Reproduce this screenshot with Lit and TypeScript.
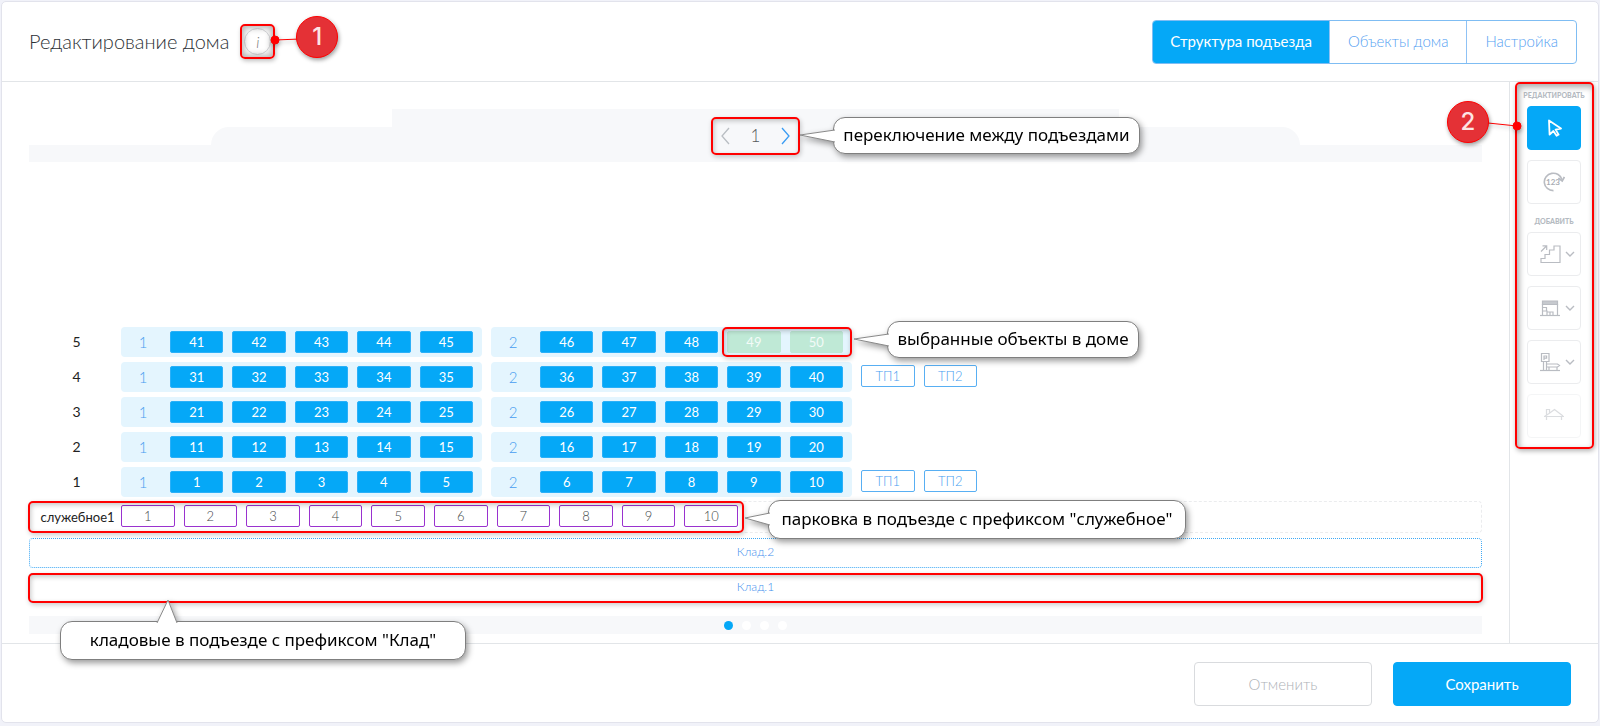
import { LitElement, html, css, svg, nothing } from "lit";
import { customElement, property, state } from "lit/decorators.js";
import { classMap } from "lit/directives/class-map.js";

type Side = "left" | "top";

@customElement("note-callout")
class NoteCallout extends LitElement {
  @property({ reflect: true }) side: Side = "left";
  @property({ type: Number }) reach = 36;

  static styles = css`
    :host {
      display: flex;
      align-items: center;
      justify-content: center;
      box-sizing: border-box;
      padding-bottom: 2px;
      border: 1px solid #7f7f7f;
      border-radius: 12px;
      background: #fff;
      color: #000;
      font: 400 17px/20px "Noto Sans", "Open Sans", sans-serif;
      white-space: nowrap;
      filter: drop-shadow(2px 3px 3px rgba(0, 0, 0, 0.4));
    }
    .tail {
      position: absolute;
      display: block;
      fill: #fff;
      stroke: #8a8a8a;
      stroke-width: 1;
    }
    .left {
      right: calc(100% - 1px);
      top: 11px;
    }
    .top {
      left: 95px;
      bottom: calc(100% - 1px);
    }
  `;

  render() {
    return html`
      ${this.side === "left"
        ? html`<svg class="tail left" width=${this.reach} height="14" aria-hidden="true">
            <path d="M${this.reach} 1 L1 6 L${this.reach} 13" />
          </svg>`
        : html`<svg class="tail top" width="22" height="24" aria-hidden="true">
            <path d="M1 24 L12 1 L21 24" />
          </svg>`}
      <slot></slot>
    `;
  }
}

@customElement("note-marker")
class NoteMarker extends LitElement {
  static styles = css`
    :host {
      display: grid;
      place-items: center;
      box-sizing: border-box;
      width: 42px;
      height: 42px;
      border: 1px solid #f00;
      border-radius: 50%;
      background: #e43136;
      box-shadow: 1px 2px 4px rgba(0, 0, 0, 0.4);
      color: #fde4e4;
      font: 500 24px/40px Inter, "Liberation Sans", sans-serif;
    }
  `;

  render() {
    return html`<slot></slot>`;
  }
}

interface Floor {
  level: number;
  sections: { name: number; flats: number[] }[];
  extra: string[];
}

const range = (from: number, count: number) =>
  Array.from({ length: count }, (_, i) => from + i);

const FLOORS: Floor[] = [5, 4, 3, 2, 1].map((level) => ({
  level,
  sections: [
    { name: 1, flats: range((level - 1) * 10 + 1, 5) },
    { name: 2, flats: range((level - 1) * 10 + 6, 5) },
  ],
  extra: level === 4 || level === 1 ? ["ТП1", "ТП2"] : [],
}));

const TABS = ["Структура подъезда", "Объекты дома", "Настройка"];

const ICONS = {
  cursor: svg`<path d="M3 2.5 L15 10.5 L9.6 11.6 L12.6 16.6 L10.6 17.8 L7.4 13 L3.6 16.6 Z" stroke-width="1.8" stroke-linejoin="round"/>`,
  renumber: svg`<path d="M10.5 18.6 A9 8.7 0 1 1 19 7.6" stroke-width="1.6"/><path d="M15.4 6 L19.2 9 L21.4 5" stroke-width="1.8"/><text x="10" y="13" text-anchor="middle" class="digits">123</text>`,
  stairs: svg`<path d="M1 18.5 V14.5 H5 V10.5 H9.5 V6 H14 V2 H20 V18.5 Z"/><path d="M1 7.5 L6.5 2 M2.5 1.8 H6.7 V6"/>`,
  shop: svg`<path d="M0 17.5 H20"/><path d="M2.5 3 H17.5 V6.5 H2.5 Z" class="solid"/><path d="M2.5 17.5 V6 M17.5 6 V17.5 M6.5 13 V9.5 H2.5 M3 13 H7 V17 M7 14 H13 V17 M10 14 V17"/>`,
  parking: svg`<path d="M0 18.5 H20"/><path d="M1.5 1.5 H9 V9.5 H1.5 Z M4 8 V4 H6.6 V6.2 H4 M3.5 9.5 V18 M6.5 9.5 V18 M6.5 12 H17.5 L19.5 13.5 L17.5 15 H6.5 M9 15 V18 M17 15 V18"/>`,
  storage: svg`<path d="M1 10.5 H21 M1.5 10.5 L6 7.5 L11.5 3.5 L20 10 M3.5 8.5 V3.5 H6.5 V6.5 M3.5 10 V14 M18.5 10 V14" stroke-width="1.2"/>`,
};

interface Tool {
  icon: keyof typeof ICONS;
  label: string;
  menu?: boolean;
  active?: boolean;
  faded?: boolean;
}

const TOOL_GROUPS: { title: string; tools: Tool[] }[] = [
  {
    title: "РЕДАКТИРОВАТЬ",
    tools: [
      { icon: "cursor", label: "Выделение", active: true },
      { icon: "renumber", label: "Нумерация" },
    ],
  },
  {
    title: "ДОБАВИТЬ",
    tools: [
      { icon: "stairs", label: "Подъезд", menu: true },
      { icon: "shop", label: "Помещение", menu: true },
      { icon: "parking", label: "Парковка", menu: true },
      { icon: "storage", label: "Чердак", faded: true },
    ],
  },
];

@customElement("app-root")
class AppRoot extends LitElement {
  @state() private tab = 0;
  @state() private selected = new Set([49, 50]);

  static styles = css`
    :host {
      display: flex;
      box-sizing: border-box;
      min-height: 100vh;
      padding: 1px 1px 3px;
      background: #f1f2f9;
      color: #3c4045;
      font: 300 14px/20px Lato, "Open Sans", sans-serif;
    }
    *,
    *::before {
      box-sizing: border-box;
    }
    button {
      margin: 0;
      padding: 0;
      font: inherit;
      color: inherit;
      background: none;
      border: 0;
      cursor: pointer;
    }
    .card {
      flex: 1;
      min-width: 0;
      display: flex;
      flex-direction: column;
      background: #fff;
      border: 1px solid #e2e3ec;
      border-radius: 5px;
    }
    .header {
      display: flex;
      align-items: center;
      justify-content: space-between;
      height: 80px;
      padding: 0 21px 0 27px;
      border-bottom: 1px solid #e2e5e8;
    }
    .heading {
      display: flex;
      align-items: center;
      gap: 15px;
    }
    h1 {
      margin: 0;
      padding-bottom: 2px;
      font-size: 20px;
      line-height: 28px;
      font-weight: 300;
      color: #2c3136;
    }
    .info-wrap {
      position: relative;
      display: flex;
    }
    .info {
      width: 27px;
      height: 27px;
      border: 1px solid #d9dadd;
      border-radius: 50%;
      background: #fff;
      color: #777;
      font-style: italic;
      font-size: 15px;
      line-height: 24px;
    }
    .tabs {
      display: flex;
      height: 44px;
      border: 1px solid #7fbdf3;
      border-radius: 4px;
      overflow: hidden;
    }
    .tab {
      padding: 0 18px 2px;
      color: #559ff2;
      font-size: 15px;
    }
    .tab + .tab {
      border-left: 1px solid #8fc2f5;
    }
    .tab.on {
      margin: -1px;
      background: #05a8f7;
      color: #fff;
      font-weight: 400;
    }
    .body {
      flex: 1;
      display: flex;
    }
    .stage {
      flex: 1;
      min-width: 0;
      display: flex;
      flex-direction: column;
      padding: 27px 27px 9px;
    }
    .roof {
      display: grid;
      justify-items: center;
      grid-template-rows: 18px 18px 17px;
    }
    .tier {
      height: 100%;
      background: #f7f8fa;
    }
    .tier.narrow {
      width: 50%;
      height: 36px;
    }
    .tier.middle {
      width: 75%;
      border-radius: 18px 18px 0 0;
      display: flex;
      justify-content: center;
    }
    .tier.wide {
      width: 100%;
    }
    .switcher {
      position: relative;
      display: flex;
      align-items: center;
      justify-content: space-between;
      width: 89px;
      height: 38px;
      margin-top: -10px;
      padding: 0 10px;
      font-size: 17px;
      color: #55595c;
    }
    .arrow {
      display: flex;
    }
    .arrow svg {
      fill: none;
      stroke: #b9bec3;
      stroke-width: 1.3;
    }
    .arrow.next svg {
      stroke: #3a9cf3;
    }
    .plan {
      display: flex;
      flex-direction: column;
      gap: 5px;
      margin-top: auto;
    }
    .floors {
      display: flex;
      flex-direction: column;
      gap: 5px;
      margin-bottom: -1px;
    }
    .floor {
      display: flex;
      gap: 9px;
      height: 30px;
    }
    .level {
      flex: none;
      display: grid;
      place-items: center;
      width: 83px;
      padding-left: 12px;
      color: #222;
      font-size: 14px;
      font-weight: 400;
    }
    .section {
      position: relative;
      display: flex;
      width: 361px;
      padding: 4px 9px 4px 0;
      border-radius: 4px;
      background: #e4f5fe;
    }
    .section-name {
      width: 49px;
      padding-right: 5px;
      text-align: center;
      line-height: 22px;
      font-size: 15px;
      color: #479df0;
    }
    .cells {
      flex: 1;
      display: grid;
      grid-auto-flow: column;
      grid-auto-columns: 1fr;
      gap: 9px;
    }
    .cell {
      height: 22px;
      border-radius: 2px;
      font-size: 13px;
      line-height: 20px;
    }
    .cell.flat {
      border: 1px solid #2bb0f8;
      background: #05a8f7;
      color: #fff;
      font-weight: 400;
    }
    .cell.picked {
      border-color: #bfe9d6;
      background: #bfe9d6;
      color: #f3fbf8;
    }
    .extra {
      width: 116px;
      flex: none;
      padding-top: 3px;
    }
    .cell.tech {
      border: 1px solid #58aff3;
      background: #fff;
      color: #479df0;
    }
    .parking {
      position: relative;
      display: flex;
      height: 32px;
      border: 1px dashed #ebecee;
      border-radius: 4px;
    }
    .parking .level {
      width: 91px;
      padding-left: 4px;
      font-size: 13px;
    }
    .spots {
      flex: none;
      width: 617px;
      padding-top: 3px;
    }
    .cell.spot {
      border: 1px solid #9a32cf;
      background: #fff;
      color: #444749;
    }
    .storage {
      position: relative;
      display: grid;
    }
    .store {
      height: 30px;
      padding-bottom: 2px;
      border: 1px dotted #3fa9f5;
      border-radius: 4px;
      color: #3f8fee;
      font-size: 12px;
      line-height: 26px;
    }
    .ground {
      display: flex;
      align-items: center;
      justify-content: center;
      gap: 9px;
      height: 18px;
      margin-top: 13px;
      background: #f7f8fa;
    }
    .dot {
      width: 9px;
      height: 9px;
      border-radius: 50%;
      background: #fff;
    }
    .dot.on {
      background: #05a8f7;
    }
    .side {
      position: relative;
      flex: none;
      display: flex;
      flex-direction: column;
      gap: 12px;
      width: 89px;
      padding-top: 8px;
      border-left: 1px solid #e2e5e8;
    }
    .group {
      display: flex;
      flex-direction: column;
      align-items: center;
      gap: 10px;
    }
    .group-title {
      margin: 0 0 -4px;
      color: #b4bac1;
      font-size: 7px;
      line-height: 10px;
      font-weight: 900;
    }
    .tool {
      display: flex;
      align-items: center;
      justify-content: center;
      gap: 3px;
      width: 54px;
      height: 44px;
      border: 1px solid #ebecee;
      border-radius: 4px;
      background: #fff;
    }
    .tool.menu {
      padding-left: 6px;
    }
    .tool svg {
      fill: none;
      stroke: #b9bcc2;
      stroke-width: 1.2;
    }
    .tool .solid {
      fill: #c6c9ce;
    }
    .tool.on {
      border-color: #05a8f7;
      background: #05a8f7;
    }
    .tool.on svg {
      stroke: #fff;
    }
    .tool.faded {
      opacity: 0.5;
    }
    .tool .digits {
      fill: #a9adb4;
      stroke: none;
      font: 700 8px/8px Lato, sans-serif;
    }
    .footer {
      display: flex;
      align-items: center;
      justify-content: flex-end;
      gap: 21px;
      height: 79px;
      padding: 1px 27px 0;
      border-top: 1px solid #e2e5e8;
    }
    .action {
      width: 178px;
      height: 44px;
      border: 1px solid #d9dbde;
      border-radius: 4px;
      color: #aeb2b7;
      font-size: 15px;
    }
    .action.primary {
      border-color: #05a8f7;
      background: #05a8f7;
      color: #fff;
      font-weight: 400;
    }

    .frame {
      position: absolute;
      z-index: 2;
      inset: 0;
      border: 2px solid #f00;
      border-radius: 5px;
      box-shadow:
        1px 2px 5px rgba(0, 0, 0, 0.2),
        inset 1px 2px 5px rgba(0, 0, 0, 0.22);
      pointer-events: none;
    }
    .frame.info-frame {
      inset: -4px;
      box-shadow:
        1px 2px 4px rgba(0, 0, 0, 0.25),
        inset 0 0 6px 2px rgba(0, 0, 0, 0.3);
    }
    .frame.side-frame {
      inset: 0 4px auto 5px;
      height: 367px;
      box-shadow:
        1px 2px 5px rgba(0, 0, 0, 0.3),
        inset 2px 3px 6px rgba(0, 0, 0, 0.35);
    }
    .frame.pick-frame {
      left: auto;
      width: 130px;
    }
    .frame.parking-frame {
      inset: -1px auto -1px -2px;
      width: 716px;
    }
    .frame.storage-frame {
      inset: 0 -1px;
    }
    .callout {
      position: absolute;
      z-index: 3;
      height: 37px;
      left: calc(100% + 33px);
      top: 0;
    }
    .callout.entrance {
      width: 307px;
    }
    .callout.picked-note {
      width: 252px;
      top: -6px;
      left: calc(100% + 35px);
    }
    .callout.parking-note {
      width: 418px;
      height: 39px;
      top: -2px;
      left: 738px;
    }
    .callout.storage-note {
      width: 406px;
      height: 39px;
      top: 48px;
      left: 31px;
    }
    .pointer {
      position: absolute;
      z-index: 3;
      overflow: visible;
      fill: #f00;
      stroke: #f00;
      filter: drop-shadow(1px 2px 2px rgba(0, 0, 0, 0.3));
    }
    .pointer.one {
      left: 24px;
      top: 5px;
    }
    .pointer.two {
      left: -22px;
      top: 36px;
    }
    .marker {
      position: absolute;
      z-index: 4;
    }
    .marker.one {
      left: 52px;
      top: -12px;
    }
    .marker.two {
      left: -63px;
      top: 19px;
    }
  `;

  private toggle(flat: number) {
    const next = new Set(this.selected);
    next.has(flat) ? next.delete(flat) : next.add(flat);
    this.selected = next;
  }

  private renderFloor(floor: Floor) {
    return html`
      <div class="floor">
        <div class="level">${floor.level}</div>
        ${floor.sections.map(
          (section) => html`
            <div class="section">
              <div class="section-name">${section.name}</div>
              <div class="cells">
                ${section.flats.map(
                  (flat) => html`<button
                    class=${classMap({ cell: true, flat: true, picked: this.selected.has(flat) })}
                    @click=${() => this.toggle(flat)}
                  >${flat}</button>`,
                )}
              </div>
              ${floor.level === 5 && section.name === 2
                ? html`<div class="frame pick-frame"></div>
                    <note-callout class="callout picked-note">выбранные объекты в доме</note-callout>`
                : nothing}
            </div>
          `,
        )}
        ${floor.extra.length
          ? html`<div class="cells extra">
              ${floor.extra.map((name) => html`<button class="cell tech">${name}</button>`)}
            </div>`
          : nothing}
      </div>
    `;
  }

  private renderTool(tool: Tool) {
    return html`
      <button
        class=${classMap({ tool: true, menu: !!tool.menu, on: !!tool.active, faded: !!tool.faded })}
        aria-label=${tool.label}
      >
        <svg width=${tool.icon === "cursor" ? 16 : 22} height="20" aria-hidden="true">
          ${ICONS[tool.icon]}
        </svg>
        ${tool.menu
          ? html`<svg width="10" height="6" aria-hidden="true"><path d="M1 1 L5 5 L9 1" stroke-width="1.4" /></svg>`
          : nothing}
      </button>
    `;
  }

  render() {
    return html`
      <main class="card">
        <header class="header">
          <div class="heading">
            <h1>Редактирование дома</h1>
            <div class="info-wrap">
              <button class="info" aria-label="Справка">i</button>
              <div class="frame info-frame"></div>
              <svg class="pointer one" width="34" height="14" aria-hidden="true">
                <circle cx="7" cy="7" r="4" /><path d="M7 7 L32 6" />
              </svg>
              <note-marker class="marker one">1</note-marker>
            </div>
          </div>
          <nav class="tabs">
            ${TABS.map(
              (name, i) => html`<button
                class=${classMap({ tab: true, on: i === this.tab })}
                @click=${() => (this.tab = i)}
              >${name}</button>`,
            )}
          </nav>
        </header>

        <div class="body">
          <section class="stage">
            <div class="roof">
              <div class="tier narrow"></div>
              <div class="tier middle">
                <div class="switcher">
                  <button class="arrow" aria-label="Предыдущий подъезд">
                    <svg width="9" height="18"><path d="M8 1 L1 9 L8 17" /></svg>
                  </button>
                  <span>1</span>
                  <button class="arrow next" aria-label="Следующий подъезд">
                    <svg width="9" height="18"><path d="M1 1 L8 9 L1 17" /></svg>
                  </button>
                  <div class="frame"></div>
                  <note-callout class="callout entrance">переключение между подъездами</note-callout>
                </div>
              </div>
              <div class="tier wide"></div>
            </div>

            <div class="plan">
              <div class="floors">${FLOORS.map((floor) => this.renderFloor(floor))}</div>
              <div class="parking">
                <div class="level">служебное1</div>
                <div class="cells spots">
                  ${range(1, 10).map((n) => html`<button class="cell spot">${n}</button>`)}
                </div>
                <div class="frame parking-frame"></div>
                <note-callout reach="26" class="callout parking-note">парковка в подъезде с префиксом "служебное"</note-callout>
              </div>
              <div class="storage"><button class="store">Клад.2</button></div>
              <div class="storage">
                <button class="store">Клад.1</button>
                <div class="frame storage-frame"></div>
                <note-callout side="top" class="callout storage-note">кладовые в подъезде с префиксом "Клад"</note-callout>
              </div>
            </div>

            <div class="ground">
              ${[1, 2, 3, 4].map(
                (n) => html`<button class=${classMap({ dot: true, on: n === 1 })} aria-label="Подъезд ${n}"></button>`,
              )}
            </div>
          </section>

          <aside class="side">
            ${TOOL_GROUPS.map(
              (group) => html`<div class="group">
                <h2 class="group-title">${group.title}</h2>
                ${group.tools.map((tool) => this.renderTool(tool))}
              </div>`,
            )}
            <div class="frame side-frame"></div>
            <svg class="pointer two" width="34" height="14" aria-hidden="true">
              <circle cx="29" cy="8" r="4" /><path d="M29 8 L0 5" />
            </svg>
            <note-marker class="marker two">2</note-marker>
          </aside>
        </div>

        <footer class="footer">
          <button class="action">Отменить</button>
          <button class="action primary">Сохранить</button>
        </footer>
      </main>
    `;
  }
}
